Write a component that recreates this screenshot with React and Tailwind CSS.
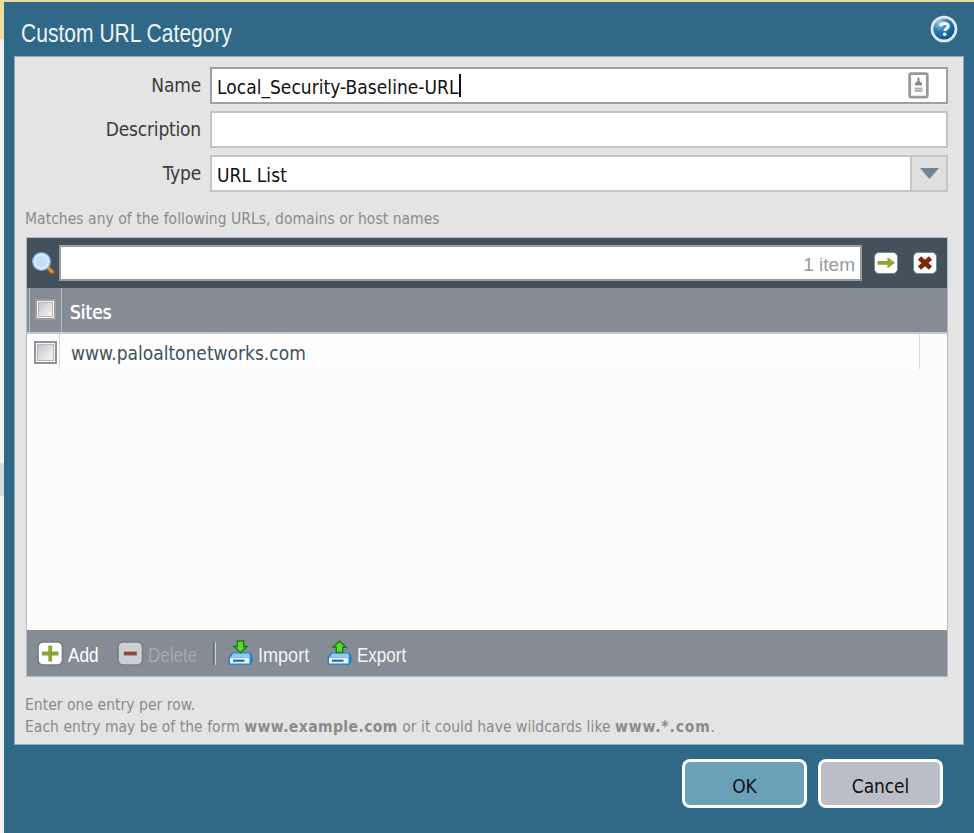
import clsx from 'clsx'

const HelpIcon = () => (
  <svg width="28" height="28" viewBox="0 0 28 28">
    <defs>
      <radialGradient id="helpFill" cx="0.3" cy="0.2" r="0.85">
        <stop offset="0" stopColor="#a9cbe0" />
        <stop offset="0.45" stopColor="#2f7fb2" />
        <stop offset="1" stopColor="#04568f" />
      </radialGradient>
    </defs>
    <circle cx="14" cy="14" r="13.3" fill="#dfe9f5" />
    <circle cx="14" cy="14" r="10.6" fill="url(#helpFill)" />
    <path d="M10.5 11.4c.3-2 1.700-3 3.900-3 2.300 0 3.900 1 3.900 2.800 0 2.400-3.200 2.300-3.400 4.600" fill="none" stroke="#f4f9fd" strokeWidth="3" />
    <circle cx="14.700" cy="19.300" r="1.800" fill="#f4f9fd" />
  </svg>
)

const ContactIcon = () => (
  <svg width="21" height="27" viewBox="0 0 21 27">
    <rect x="1.700" y="1.700" width="17.600" height="23.400" rx="1.500" fill="#fff" stroke="#999" strokeWidth="2.800" />
    <path d="M9.500 5.500h2v3.500l2.500 2v2.500H7V11l2.500-2z" fill="#8c8c8c" />
    <path d="M6.500 16.600h8M6.500 19h8" stroke="#b4b4b4" strokeWidth="2.200" />
  </svg>
)

const SearchIcon = () => (
  <svg width="25" height="25" viewBox="0 0 25 25">
    <path d="M17.500 17.500l4 4" stroke="#8a5420" strokeWidth="5" strokeLinecap="round" />
    <path d="M17.300 17l3.800 3.800" stroke="#d8914b" strokeWidth="2.800" strokeLinecap="round" />
    <circle cx="10.500" cy="10.500" r="8.800" fill="#c4dffa" stroke="#83b3ee" strokeWidth="1.400" />
    <circle cx="10.500" cy="10.500" r="7" fill="none" stroke="#e4f1fd" strokeWidth="1.500" />
  </svg>
)

const ArrowIcon = () => (
  <svg width="26" height="24" viewBox="0 0 26 24">
    <rect x="1.500" y="1.500" width="23" height="21" rx="4.500" fill="#fff" stroke="#6f8a9b" strokeWidth="1" />
    <path d="M4.500 10h10V6.200l7.500 5.600-7.500 5.600v-3.700h-10z" fill="#8da52f" />
  </svg>
)

const ClearIcon = () => (
  <svg width="26" height="24" viewBox="0 0 26 24">
    <rect x="1.500" y="1.500" width="23" height="21" rx="4.500" fill="#fff" stroke="#6f8a9b" strokeWidth="1" />
    <path d="M7.500 7l11 10M18.500 7L7.500 17" stroke="#80260c" strokeWidth="4.800" />
  </svg>
)

const AddIcon = () => (
  <svg width="27" height="25" viewBox="0 0 27 25">
    <rect x="1" y="1" width="24.500" height="23" rx="5" fill="#fff" stroke="#6b7d8a" strokeWidth="1.600" />
    <path d="M5 12.500h16.500M13.200 4.500v16" stroke="#8fa236" strokeWidth="3.800" />
  </svg>
)

const DeleteIcon = () => (
  <svg width="27" height="25" viewBox="0 0 27 25">
    <rect x="1" y="1" width="24.500" height="23" rx="5" fill="#cdcfd2" stroke="#717f8a" strokeWidth="1.600" />
    <path d="M6.800 12.500h13" stroke="#8c4a3a" strokeWidth="3.800" />
  </svg>
)

const DriveIcon = ({ up }) => (
  <svg width="26" height="26" viewBox="0 0 26 26">
    <path d="M4 12.500h18l2.700 3v6L22.500 25H1.500L.5 24v-6.500z" fill="#2484c8" />
    <path d="M5 13.500H21l1.500 3.500H3z" fill="#8accf3" />
    <path d="M2 17.500h19.500v6H2z" fill="#e6f4fd" />
    <path d="M5 20.700h11.500" stroke="#2769b4" strokeWidth="2.200" />
    {up ? (
      <path d="M12.500 1L6 7.200h3.300V12.500h6.400V7.200H19z" fill="#55dd2b" stroke="#23751a" strokeWidth="1.400" />
    ) : (
      <path d="M9.300 1h6.400v5.500H19L12.500 12.800 6 6.500h3.300z" fill="#55dd2b" stroke="#23751a" strokeWidth="1.400" />
    )}
  </svg>
)

const Checkbox = ({ className }) => (
  <div className={clsx('border-2 bg-[#f6f6f6] p-px', className)}>
    <div className="h-full w-full border border-[#b4b7ba] bg-linear-to-br from-[#c3c6cc] to-[#f8f8f8]" />
  </div>
)

const Field = ({ label, children }) => (
  <div className="flex h-[37px] items-center gap-[9px]">
    <label className="w-[175px] text-right text-[19px] tracking-[-0.2px] text-[#3b3b3b]">{label}</label>
    {children}
  </div>
)

const ToolButton = ({ icon, label, className, textClass }) => (
  <button className={clsx('flex items-center gap-1', className)}>
    {icon}
    <span className={clsx("origin-left whitespace-nowrap pt-1 text-left font-['Liberation_Sans',sans-serif] text-[21px] leading-6", textClass)}>
      {label}
    </span>
  </button>
)

const App = () => {
  return (
    <div className="relative flex h-[833px] w-[974px] flex-col overflow-hidden bg-[#f1f2f3] pl-1 font-['DejaVu_Sans_Condensed','DejaVu_Sans',sans-serif] [font-stretch:condensed]">
      {/* Page showing behind the dialog */}
      <div className="absolute left-0 top-0 h-[39px] w-1 bg-[#f1dca0]" />
      <div className="absolute left-0 top-[463px] h-[33px] w-1 bg-[#d3dbdd]" />
      <div className="-ml-1 h-0.5 shrink-0 bg-[#ecd9a0]" />

      <div className="flex flex-1 flex-col bg-[#306987] px-2.5">
        {/* Title bar */}
        <div className="flex h-[54px] items-center justify-between pl-[7px] pr-[6px]">
          <h1 className="origin-left scale-x-[0.81] whitespace-nowrap pt-2 font-['Liberation_Sans',sans-serif] text-[26px] leading-8 text-[#eef4f8]">
            Custom URL Category
          </h1>
          <HelpIcon />
        </div>

        {/* Body */}
        <div className="flex h-[689px] flex-col border border-[#8aabb9] bg-[#e4e4e4] pl-[11px] pr-[15px] pt-[10px]">
          <div className="flex flex-col gap-[7px]">
            <Field label="Name">
              <div className="flex h-[37px] w-[738px] items-center border-2 border-[#a0a0a0] bg-white pl-[5px] pr-[17px]">
                <span className="pt-[3px] text-[19px] tracking-[0.03px] text-[#111]">Local_Security-Baseline-URL</span>
                <span className="h-[23px] w-0.5 bg-[#111]" />
                <span className="ml-auto"><ContactIcon /></span>
              </div>
            </Field>
            <Field label="Description">
              <div className="h-[37px] w-[738px] border-2 border-[#c3c3c3] bg-white" />
            </Field>
            <Field label="Type">
              <div className="flex h-[37px] w-[738px] items-center border-2 border-[#c3c5c7] bg-white pl-[5px]">
                <span className="flex-1 pt-[3px] text-[19px] tracking-[0.1px] text-[#111]">URL List</span>
                <span className="flex h-full w-[36px] items-center justify-center border-l-2 border-[#c3c5c7] bg-[#dfdfdf]">
                  <svg width="19" height="11" viewBox="0 0 19 11"><path d="M0 0h19L9.500 11z" fill="#74848f" /></svg>
                </span>
              </div>
            </Field>
          </div>

          <p className="-ml-px mt-4 h-[29px] text-[15.5px] leading-[22px] tracking-[0.03px] text-[#8b8b8b]">
            Matches any of the following URLs, domains or host names
          </p>

          {/* Grid */}
          <div className="flex h-[440px] w-[922px] flex-col border border-[#b6bac0] bg-[#fbfdfc]">
            <div className="flex h-[50px] shrink-0 items-center bg-[#45515a] pl-1">
              <SearchIcon />
              <div className="ml-[3px] flex h-[36px] w-[803px] items-center justify-end border-2 border-[#999b9d] bg-white pr-[5px]">
                <span className="pt-1 font-['Liberation_Sans',sans-serif] text-[19px] text-[#999]">1 item</span>
              </div>
              <span className="ml-[11px]"><ArrowIcon /></span>
              <span className="ml-[13px]"><ClearIcon /></span>
            </div>

            <div className="flex h-[46px] shrink-0 border-b-2 border-[#c4c8cc] bg-[#858c93]">
              <div className="ml-[2px] flex w-[33px] justify-center border-x border-[#b9bfc4] pt-[11px]">
                <Checkbox className="h-[21px] w-[21px] border-[#a29f99]" />
              </div>
              <span className="ml-2 pt-[11px] text-[19px] leading-[27px] text-white [text-shadow:0_0_1px_#fff]">Sites</span>
            </div>

            <div className="flex h-[35px] w-full shrink-0 bg-[#fdfdfe]">
              <div className="flex w-[33px] justify-end border-r border-[#d7dbe0] pr-[2px] pt-[7px]">
                <Checkbox className="h-[23px] w-[23px] border-[#909396]" />
              </div>
              <span className="ml-[11px] flex-1 pt-[6px] text-[19px] leading-[27px] text-[#42515c]">www.paloaltonetworks.com</span>
              <div className="w-[28px] border-l border-[#d7dbe0] bg-[#fbfdfc]" />
            </div>

            <div className="flex-1" />

            <div className="flex h-[46px] shrink-0 items-center bg-[#858c93] pl-2.5">
              <ToolButton icon={<AddIcon />} label="Add" className="text-white" textClass="w-[30px] scale-x-[0.82]" />
              <ToolButton icon={<DeleteIcon />} label="Delete" className="ml-[19px] text-[#a5aab0]" textClass="w-[50px] scale-x-[0.81]" />
              <div className="ml-[15px] h-[23px] w-[3px] border-x border-l-[#60676f] border-r-[#c9cdd3]" />
              <ToolButton icon={<DriveIcon />} label="Import" className="ml-[12px] text-[#f4f5f6]" textClass="w-[52px] scale-x-[0.86]" />
              <ToolButton icon={<DriveIcon up />} label="Export" className="ml-[17px] text-[#f4f5f6]" textClass="w-[50px] scale-x-[0.81]" />
            </div>
          </div>

          <div className="-ml-px mt-[17px] text-[15.5px] leading-[22px] tracking-[0.03px] text-[#8b8b8b]">
            <p>Enter one entry per row.</p>
            <p>
              Each entry may be of the form <b className="tracking-[0.42px]">www.example.com</b> or it could have wildcards like{' '}
              <b className="tracking-[0.85px]">www.*.com</b>.
            </p>
          </div>
        </div>

        {/* Actions */}
        <div className="mt-[14px] flex justify-end gap-[11px] pr-[21px]">
          <button className="h-[49px] w-[125px] rounded-[8px] border-[3px] border-white bg-[#6aa0b8] pt-[5px] text-[19px] text-[#111]">OK</button>
          <button className="h-[49px] w-[125px] rounded-[8px] border-[3px] border-white bg-[#bbbec7] pt-[5px] text-[19px] tracking-[-0.1px] text-[#111]">Cancel</button>
        </div>
      </div>
    </div>
  )
}

export default App
